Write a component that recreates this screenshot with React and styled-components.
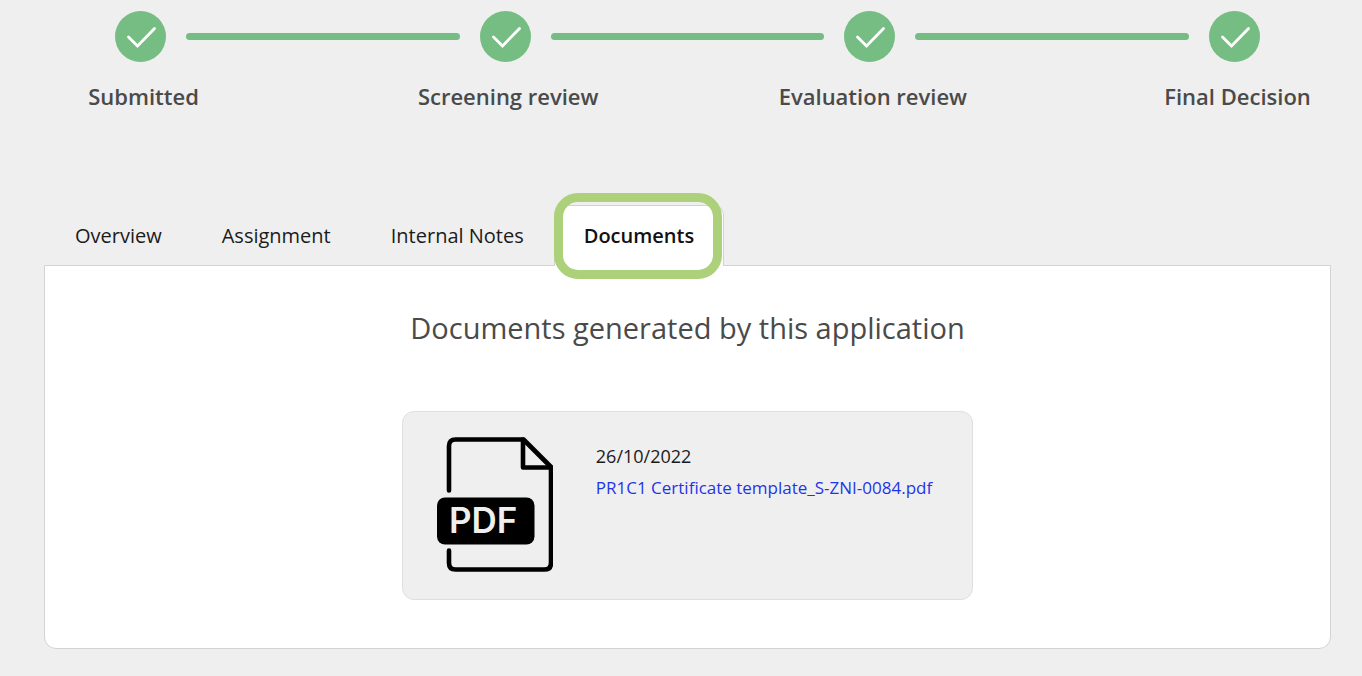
import React, { useState } from "react";
import styled, { createGlobalStyle } from "styled-components";

const GlobalStyle = createGlobalStyle`
  *, *::before, *::after { box-sizing: border-box; }
  body {
    margin: 0;
    background: #efefef;
    color: #1b1b1b;
    font-family: "Open Sans", "Noto Sans", sans-serif;
  }
`;

const Page = styled.main`
  padding: 11px 31px 27px 44px;
`;

const Steps = styled.ol`
  display: flex;
  align-items: flex-start;
  gap: 20px;
  margin: 0;
  padding: 0 71px;
  list-style: none;
`;

const Step = styled.li`
  display: flex;
  flex-direction: column;
  align-items: center;
  flex: none;
  width: 51px;
  gap: 19px;
`;

const StepMark = styled.svg`
  display: block;
  width: 51px;
  height: 51px;
`;

const StepLabel = styled.span`
  padding-left: 6px;
  color: #4a4a4a;
  font-size: 22px;
  font-weight: 600;
  line-height: 30px;
  white-space: nowrap;
`;

const Connector = styled.li`
  flex: 1;
  height: 7px;
  margin-top: 22px;
  border-radius: 4px;
  background: #75bd82;
`;

const TabList = styled.div`
  display: flex;
  margin-top: 94px;
  padding-left: 1px;
`;

const Tab = styled.button`
  position: relative;
  height: 61px;
  margin-bottom: -1px;
  padding: 0 29px;
  border: 1px solid ${(p) => (p.$active ? "#d3d3d3" : "transparent")};
  border-bottom: 0;
  border-radius: 10px 10px 0 0;
  background: ${(p) => (p.$active ? "#fff" : "transparent")};
  color: ${(p) => (p.$active ? "#111" : "#1b1b1b")};
  font-family: inherit;
  font-size: 20px;
  font-weight: ${(p) => (p.$active ? 600 : 400)};
  line-height: 28px;
  white-space: nowrap;
  cursor: pointer;
`;

const Highlight = styled.span`
  position: absolute;
  inset: -13px 1px -13px -1px;
  border: 9px solid #acd17a;
  border-radius: 24px;
  pointer-events: none;
`;

const Panel = styled.section`
  display: flex;
  flex-direction: column;
  align-items: center;
  padding: 41px 24px 48px;
  border: 1px solid #d3d3d3;
  border-radius: 0 0 12px 12px;
  background: #fff;
`;

const Title = styled.h1`
  margin: 0 0 62px;
  color: #4a4a4a;
  font-size: 29px;
  font-weight: 400;
  line-height: 42px;
  text-align: center;
`;

const Card = styled.article`
  display: flex;
  align-items: flex-start;
  gap: 43px;
  padding: 25px 40px 26px 34px;
  border: 1px solid #dfdfdf;
  border-radius: 12px;
  background: #efefef;
`;

const FileIcon = styled.svg`
  display: block;
  flex: none;
  width: 116px;
  height: 136px;
`;

const FileIconText = styled.text`
  fill: #efefef;
  font-family: Inter, sans-serif;
  font-size: 35px;
  font-weight: 600;
`;

const Details = styled.div`
  display: flex;
  flex-direction: column;
  padding-top: 3px;
  line-height: 32px;
`;

const FileDate = styled.time`
  font-size: 18px;
`;

const FileLink = styled.a`
  color: #1f35e8;
  font-size: 17px;
  text-decoration: none;
`;

const steps = ["Submitted", "Screening review", "Evaluation review", "Final Decision"];
const tabs = ["Overview", "Assignment", "Internal Notes", "Documents"];

export default function App() {
  const [active, setActive] = useState("Documents");
  return (
    <>
      <GlobalStyle />
      <Page>
        <Steps>
          {steps.map((label, i) => (
            <React.Fragment key={label}>
              {i > 0 && <Connector aria-hidden="true" />}
              <Step>
                <StepMark viewBox="0 0 51 51" aria-hidden="true">
                  <circle cx="25.5" cy="25.5" r="25.5" fill="#75bd82" />
                  <path
                    d="M13.5 26 22.5 35 39.5 17.5"
                    fill="none"
                    stroke="#fff"
                    strokeWidth="2.8"
                    strokeLinecap="round"
                  />
                </StepMark>
                <StepLabel>{label}</StepLabel>
              </Step>
            </React.Fragment>
          ))}
        </Steps>

        <TabList role="tablist">
          {tabs.map((name) => (
            <Tab
              key={name}
              type="button"
              role="tab"
              aria-selected={name === active}
              $active={name === active}
              onClick={() => setActive(name)}
            >
              {name}
              {name === active && <Highlight />}
            </Tab>
          ))}
        </TabList>

        <Panel role="tabpanel" aria-label={active}>
          <Title>Documents generated by this application</Title>
          <Card>
            <FileIcon viewBox="0 0 116 136" aria-hidden="true">
              <g fill="none" stroke="#000" strokeWidth="4.6" strokeLinecap="round" strokeLinejoin="round">
                <path d="M12 53.5V9Q12 2.5 18.5 2.5H86.5L114 30V126Q114 132.5 107.5 132.5H18.5Q12 132.5 12 126V113.5" />
                <path d="M86 2.5V30.5H114" />
              </g>
              <rect y="60.5" width="97.5" height="47" rx="8" />
              <FileIconText x="12" y="96">PDF</FileIconText>
            </FileIcon>
            <Details>
              <FileDate dateTime="2022-10-26">26/10/2022</FileDate>
              <FileLink href="#certificate">PR1C1 Certificate template_S-ZNI-0084.pdf</FileLink>
            </Details>
          </Card>
        </Panel>
      </Page>
    </>
  );
}
